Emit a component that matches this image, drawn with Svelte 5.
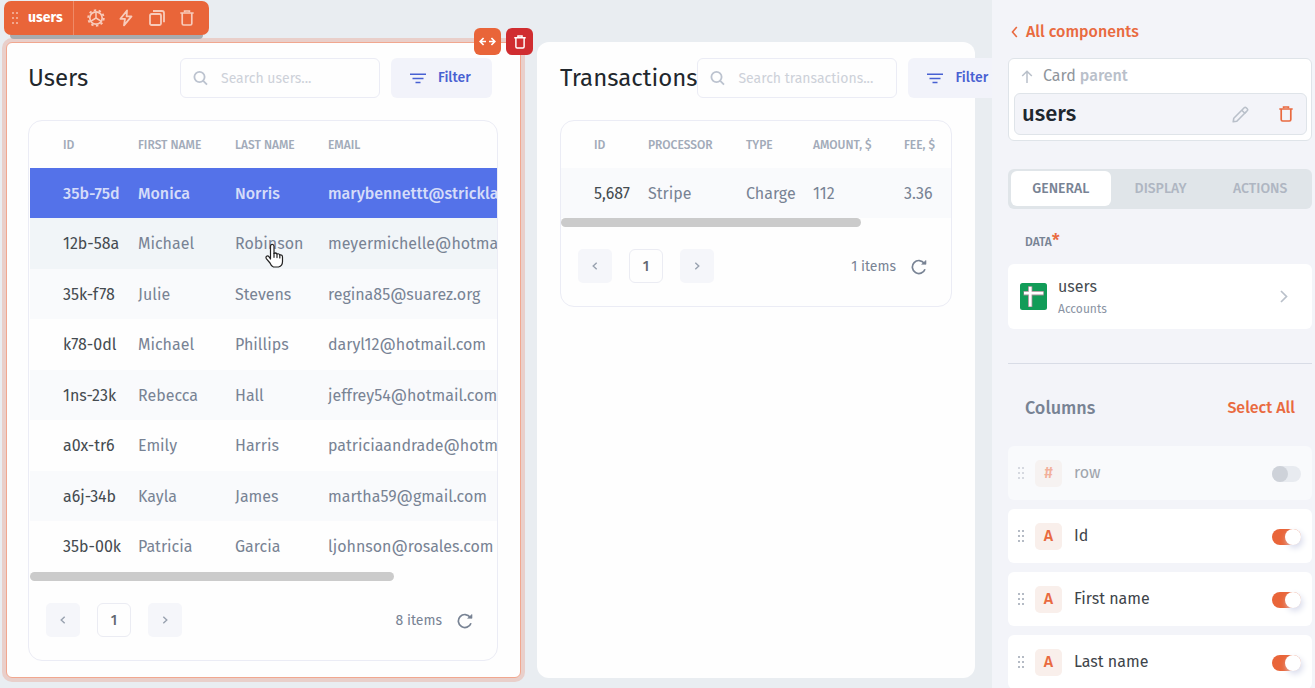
<script>
  const userColumns = ['ID', 'First name', 'Last name', 'Email'];
  const users = [
    ['35b-75d', 'Monica', 'Norris', 'marybennettt@strickland.com'],
    ['12b-58a', 'Michael', 'Robinson', 'meyermichelle@hotmail.com'],
    ['35k-f78', 'Julie', 'Stevens', 'regina85@suarez.org'],
    ['k78-0dl', 'Michael', 'Phillips', 'daryl12@hotmail.com'],
    ['1ns-23k', 'Rebecca', 'Hall', 'jeffrey54@hotmail.com'],
    ['a0x-tr6', 'Emily', 'Harris', 'patriciaandrade@hotmail.com'],
    ['a6j-34b', 'Kayla', 'James', 'martha59@gmail.com'],
    ['35b-00k', 'Patricia', 'Garcia', 'ljohnson@rosales.com']
  ];
  const transactionColumns = ['ID', 'Processor', 'Type', 'Amount, $', 'Fee, $'];
  const transactions = [['5,687', 'Stripe', 'Charge', '112', '3.36']];
  const tabs = ['General', 'Display', 'Actions'];

  let activeTab = $state('General');
  let fields = $state([
    { name: 'row', type: '#', on: false },
    { name: 'Id', type: 'A', on: true },
    { name: 'First name', type: 'A', on: true },
    { name: 'Last name', type: 'A', on: true }
  ]);
</script>

{#snippet trash(w)}
  <svg width={w} height={w + 2} viewBox="0 0 14 16" fill="none" stroke="currentColor" stroke-width="1.7">
    <path d="M0.3 3h13.4M2.2 3v10.6q0 1.4 1.4 1.4h6.8q1.4 0 1.4-1.4V3" />
    <path d="M4.6 2.3V1h4.8v1.3" />
  </svg>
{/snippet}

{#snippet grip()}
  <svg class="grip" width="8" height="14" viewBox="0 0 8 14" fill="currentColor">
    <path d="M0 1h2v2H0zM4 1h2v2H4zM0 6h2v2H0zM4 6h2v2H4zM0 11h2v2H0zM4 11h2v2H4z" />
  </svg>
{/snippet}

{#snippet header(title, placeholder)}
  <header class="card-head">
    <h2>{title}</h2>
    <label class="search">
      <svg width="15" height="15" viewBox="0 0 15 15" fill="none" stroke="currentColor" stroke-width="1.8">
        <circle cx="6.5" cy="6" r="5.1" /><path d="M10 9.6l4 4" />
      </svg>
      <input type="text" {placeholder} aria-label={placeholder} />
    </label>
    <button class="filter">
      <svg width="16" height="11" viewBox="0 0 16 11" stroke="currentColor" stroke-width="1.5">
        <path d="M0 1.2h16M2.5 5.4h11M5.5 9.6h5" />
      </svg>
      Filter
    </button>
  </header>
{/snippet}

{#snippet pager(count)}
  <div class="pager">
    <button class="step" aria-label="Previous page">
      <svg width="6" height="8" viewBox="0 0 6 8" fill="none" stroke="currentColor" stroke-width="1.4"><path d="M4.7 0.7L1.2 4l3.5 3.3" /></svg>
    </button>
    <button class="step current">1</button>
    <button class="step" aria-label="Next page">
      <svg width="6" height="8" viewBox="0 0 6 8" fill="none" stroke="currentColor" stroke-width="1.4"><path d="M1.3 0.7L4.8 4 1.3 7.3" /></svg>
    </button>
    <span class="count">{count} items</span>
    <button class="refresh" aria-label="Refresh">
      <svg width="16" height="16" viewBox="0 0 16 16" fill="none" stroke="currentColor" stroke-width="1.7">
        <path d="M14 10.2A6.5 6.5 0 1 1 13.2 4.3" /><path d="M15 1.4V5.3H10.6z" fill="currentColor" stroke-width="0.6" />
      </svg>
    </button>
  </div>
{/snippet}

{#snippet grid(columns, rows)}
  <div class="clip">
    <table>
      <colgroup>{#each columns as _}<col />{/each}</colgroup>
      <thead>
        <tr>{#each columns as c}<th>{c}</th>{/each}</tr>
      </thead>
      <tbody>
        {#each rows as row}
          <tr>{#each row as cell}<td>{cell}</td>{/each}</tr>
        {/each}
      </tbody>
    </table>
    <div class="thumb"></div>
  </div>
{/snippet}

<div class="app">
  <main class="canvas">
    <section class="card selected">
      <div class="toolbar">
        <span class="tag">{@render grip()}<b>users</b></span>
        <button aria-label="Settings">
          <svg width="18" height="18" viewBox="0 0 18 18" fill="none" stroke="currentColor">
            <circle cx="9" cy="9" r="6.2" stroke-width="1.7" />
            <circle cx="9" cy="9" r="7.8" stroke-width="1.8" stroke-dasharray="2.45 2.45" />
            <path d="M9 3v6M9 9l5 3.2M9 9l-5 3.2" stroke-width="1.5" />
          </svg>
        </button>
        <button aria-label="Triggers">
          <svg width="14" height="18" viewBox="0 0 14 18" fill="none" stroke="currentColor" stroke-width="1.8" stroke-linejoin="round">
            <path d="M8 1.5L1.4 9.8H6L5 16.3 12.5 7.4H7.6z" />
          </svg>
        </button>
        <button aria-label="Duplicate">
          <svg width="16" height="16" viewBox="0 0 16 16" fill="none" stroke="currentColor" stroke-width="1.8">
            <rect x="1" y="4" width="11" height="11" rx="1.5" /><path d="M4 1h9q2 0 2 2v9.3" />
          </svg>
        </button>
        <button aria-label="Delete users">{@render trash(14)}</button>
      </div>
      <div class="handles">
        <button aria-label="Resize">
          <svg width="17" height="9" viewBox="0 0 17 9" fill="none" stroke="currentColor" stroke-width="1.7">
            <path d="M4.6 1L1.2 4.5 4.6 8M1.2 4.5h5.8M12.4 1l3.4 3.5L12.4 8M15.8 4.5H10" />
          </svg>
        </button>
        <button class="danger" aria-label="Remove component">{@render trash(12)}</button>
      </div>
      {@render header('Users', 'Search users...')}
      <div class="panel users">
        {@render grid(userColumns, users)}
        {@render pager(8)}
      </div>
      <svg class="cursor" width="19" height="27" viewBox="0 0 19 27" fill="#fff" stroke="#222" stroke-width="1.2" stroke-linejoin="round" stroke-linecap="round">
        <path d="M5.5 16V3.3Q5.5 1.3 7.2 1.3T9 3.3v7.2q1.8-1.2 3 .5 2-.8 2.8.9 2.7-.5 2.7 2v4.5q0 4.5-4 5.6H8.4Q6.2 23.2 5 20L1.5 15.8Q.4 14.2 1.6 13.3t2.5.6z" />
        <path d="M9 10.3v4M12 11v3.6M14.8 12v3" fill="none" />
      </svg>
    </section>

    <section class="card">
      {@render header('Transactions', 'Search transactions...')}
      <div class="panel transactions">
        {@render grid(transactionColumns, transactions)}
        {@render pager(1)}
      </div>
    </section>
  </main>

  <aside>
    <a class="back" href="#components">
      <svg width="7" height="12" viewBox="0 0 7 12" fill="none" stroke="currentColor" stroke-width="1.6"><path d="M5.8 1L1.5 6l4.3 5" /></svg>
      All components
    </a>

    <div class="identity">
      <div class="parent">
        <svg width="12" height="13" viewBox="0 0 12 13" fill="none" stroke="currentColor" stroke-width="1.5"><path d="M6 13V1.5M1.2 6L6 1.2 10.8 6" /></svg>
        <span><em>Card</em> parent</span>
      </div>
      <div class="name">
        <h1>users</h1>
        <button class="edit" aria-label="Rename">
          <svg width="17" height="17" viewBox="0 0 17 17" fill="none" stroke="currentColor" stroke-width="1.6" stroke-linejoin="round">
            <path d="M1.2 15.8l.6-3.6L12.2 1.8q1-1 2 0l1 1q1 1 0 2L4.8 15.2z" /><path d="M9.8 4.2l3 3M12.8 7.2L14 6" />
          </svg>
        </button>
        <button class="drop" aria-label="Delete component">{@render trash(14)}</button>
      </div>
    </div>

    <div class="tabs" role="tablist">
      {#each tabs as tab}
        <button role="tab" aria-selected={activeTab === tab} class:active={activeTab === tab} onclick={() => (activeTab = tab)}>{tab}</button>
      {/each}
    </div>

    <h3 class="label">Data<span>*</span></h3>
    <button class="source">
      <svg width="27" height="27" viewBox="0 0 27 27">
        <rect width="27" height="27" rx="2.5" fill="#119c58" />
        <path d="M3.5 10.2h20.3M10.2 3.2v20.8" stroke="#a08b91" stroke-width="4.4" />
        <path d="M4 10.2h19.3M10.2 3.7v19.8" stroke="#fff" stroke-width="2.8" />
      </svg>
      <span class="source-text"><span>users</span><small>Accounts</small></span>
      <svg class="go" width="8" height="13" viewBox="0 0 8 13" fill="none" stroke="currentColor" stroke-width="1.7"><path d="M1 1l5.5 5.5L1 12" /></svg>
    </button>

    <hr />

    <div class="columns-head">
      <h3>Columns</h3>
      <button>Select All</button>
    </div>
    <div class="fields">
      {#each fields as field}
        <label class="field" class:off={!field.on}>
          {@render grip()}
          <span class="type">{field.type}</span>
          <span class="field-name">{field.name}</span>
          <input type="checkbox" bind:checked={field.on} />
        </label>
      {/each}
    </div>
  </aside>
</div>

<style>
  :global(body) { background: #e9edf1; }
  .app, .app * { box-sizing: border-box; }
  .app {
    display: flex;
    height: 100vh;
    min-height: 400px;
    overflow: hidden;
    font-family: "Fira Sans", Roboto, "Noto Sans", sans-serif;
    font-size: 16px;
    line-height: 20px;
    color: #788394;
  }
  svg { display: block; flex: none; }
  h1, h2, h3 { margin: 0; font-weight: 400; }
  button {
    display: flex;
    align-items: center;
    justify-content: center;
    flex: none;
    padding: 0;
    border: 0;
    background: none;
    color: inherit;
    font: inherit;
    cursor: pointer;
  }

  .canvas {
    flex: 1;
    min-width: 0;
    display: grid;
    grid-template-columns: 515fr 438fr;
    gap: 16px;
    padding: 42px 17px 10px 6px;
    background: #e9edf1;
    overflow: hidden;
  }
  .card {
    position: relative;
    min-width: 0;
    padding: 16px 23px;
    border-radius: 12px;
    background: #fefefe;
  }
  .selected {
    padding: 15px 22px 15px 21px;
    border: 1px solid #f1a78f;
    border-radius: 6px;
    box-shadow: 0 0 0 4px #e9cfca;
  }
  .selected .card-head { padding-right: 6px; }
  .card-head { display: flex; align-items: center; }
  h2 { flex: none; margin-right: auto; font-size: 24px; line-height: 40px; color: #22272c; }
  .search {
    display: flex;
    align-items: center;
    gap: 13px;
    flex: none;
    width: 200px;
    height: 40px;
    padding: 0 12px;
    border: 1px solid #ebecf5;
    border-radius: 6px;
    color: #bcc3cf;
  }
  .search input {
    min-width: 0;
    width: 100%;
    padding: 1px 0 0;
    border: 0;
    outline: 0;
    background: none;
    font: inherit;
    font-size: 14px;
    color: #444;
  }
  .search input::placeholder { color: #cdd1d9; opacity: 1; }
  .filter {
    justify-content: flex-start;
    gap: 12px;
    width: 101px;
    height: 40px;
    margin-left: 11px;
    padding-left: 19px;
    border-radius: 6px;
    background: #f2f3fa;
    color: #4861d2;
    font-size: 14px;
    font-weight: 500;
  }

  .panel { margin-top: 22px; border: 1px solid #ebecf5; border-radius: 14px; }
  .users { padding-left: 1px; }
  .clip { overflow: hidden; }
  table { table-layout: fixed; border-collapse: collapse; width: 600px; }
  .users col:nth-child(1) { width: 108px; }
  .users col:nth-child(2) { width: 97px; }
  .users col:nth-child(3) { width: 93px; }
  .transactions col:nth-child(1) { width: 87px; }
  .transactions col:nth-child(2) { width: 98px; }
  .transactions col:nth-child(3) { width: 67px; }
  .transactions col:nth-child(4) { width: 91px; }
  th, td { padding: 0; text-align: left; white-space: nowrap; }
  th:first-child, td:first-child { padding-left: 33px; }
  th { height: 47px; font-size: 12px; font-weight: 500; text-transform: uppercase; color: #a2abb9; }
  td { height: 50px; padding-top: 2px; }
  tr:nth-child(even) td { height: 51px; padding-top: 1px; }
  td:first-child { color: #454b50; }
  tbody tr:nth-child(odd) { background: #f9fafc; }
  .users tbody tr:nth-child(1) { background: #5472e9; }
  .users tbody tr:nth-child(1) td { color: #d5dcf9; font-weight: 500; }
  .users tbody tr:nth-child(2) { background: #f1f5f8; }
  .thumb { width: 78%; height: 9px; border-radius: 5px; background: #cbcbcb; }
  .transactions .thumb { width: 77%; }

  .pager { display: flex; align-items: center; padding: 22px 24px 23px 17px; }
  .users .pager { padding-left: 16px; }
  .step { width: 34px; height: 34px; margin-right: 17px; border-radius: 5px; background: #f5f6fa; color: #98a1af; }
  .current { border: 1px solid #ebecf3; border-radius: 6px; background: #fefefe; color: #616870; font-size: 14px; font-weight: 500; }
  .current, .count, .refresh { padding-top: 2px; }
  .count { margin-left: auto; font-size: 14px; }
  .refresh { margin-left: 15px; }

  .toolbar {
    position: absolute;
    top: -42px;
    left: -3px;
    display: flex;
    align-items: center;
    width: 205px;
    height: 34px;
    padding-right: 7px;
    border-radius: 7px;
    background: #e96539;
    color: #f8cbbb;
  }
  .toolbar::after {
    content: "";
    position: absolute;
    left: 6px;
    right: 6px;
    top: 34px;
    height: 4px;
    border-radius: 0 0 6px 6px;
    background: #a9abae;
  }
  .toolbar button { flex: 1; }
  .tag { display: flex; align-items: center; gap: 8px; width: 70px; height: 34px; padding-left: 8px; margin-right: 7px; border-right: 1px solid #ef8a67; color: #f2a78e; }
  .tag b { font-size: 14px; font-weight: 700; color: #fff; }
  .handles { position: absolute; top: -15px; right: -13px; display: flex; gap: 5px; }
  .handles button { width: 27px; height: 27px; border-radius: 6px; background: #e96539; color: #fff; }
  .handles .danger { background: #d02d30; }
  .cursor { position: absolute; left: 258px; top: 200px; }

  aside { position: relative; flex: none; width: 323px; padding: 22px 3px 0 16px; background: #f3f4f9; overflow: hidden; }
  .back { display: flex; align-items: center; gap: 8px; padding-left: 3px; color: #e96a40; font-weight: 500; text-decoration: none; }
  .identity { margin-top: 16px; padding: 5px 4px 5px 5px; border: 1px solid #dfe4e9; border-radius: 6px; background: #fff; }
  .parent { display: flex; align-items: center; gap: 10px; height: 29px; padding: 0 7px 5px; color: #b9c0ca; font-weight: 500; }
  .parent em { font-style: normal; color: #8f959c; font-weight: 400; }
  .name { display: flex; align-items: center; height: 42px; padding: 0 13px 0 7px; border: 1px solid #dfe4e9; border-radius: 6px; background: #f3f4f9; }
  h1 { font-size: 22px; line-height: 28px; font-weight: 500; color: #20262e; }
  .edit { margin-left: auto; color: #b9c0ca; }
  .drop { margin-left: 30px; color: #e96a40; }
  .tabs { display: flex; margin-top: 28px; padding: 2px 2px 3px 3px; height: 40px; border-radius: 6px; background: #e0e5e9; }
  .tabs button { flex: 1; border-radius: 6px; color: #afb6c2; font-size: 14px; font-weight: 500; text-transform: uppercase; }
  .tabs .active { background: #fff; color: #788394; }
  .label { display: flex; margin-top: 23px; padding-left: 17px; font-size: 12px; font-weight: 500; text-transform: uppercase; }
  .label span { font-size: 18px; line-height: 18px; color: #e96a40; }
  .source { width: 100%; height: 65px; margin-top: 12px; padding: 0 24px 0 12px; border-radius: 6px; background: #fff; }
  .source-text { display: flex; flex-direction: column; margin: 0 auto 0 11px; padding-top: 2px; text-align: left; color: #454b50; }
  small { margin-top: 2px; font-size: 12px; color: #8a93a3; }
  .go { color: #b9c0ca; }
  hr { height: 1px; margin: 34px 0 0; border: 0; background: #d8dce6; }
  .columns-head { display: flex; justify-content: space-between; align-items: center; margin-top: 34px; padding: 0 17px; }
  .columns-head h3 { font-size: 18px; font-weight: 500; }
  .columns-head button { color: #e96a40; font-weight: 500; }
  .fields { display: grid; gap: 9px; margin-top: 28px; }
  .field { display: flex; align-items: center; height: 54px; padding: 0 11px 0 10px; border-radius: 6px; background: #fff; color: #3e444a; }
  .field .grip { color: #b5bbc5; }
  .type { display: grid; place-items: center; width: 27px; height: 27px; margin: 0 12px 0 9px; border-radius: 5px; background: #f9efeb; color: #e96a40; font-weight: 500; }
  .field input {
    appearance: none;
    display: flex;
    width: 29px;
    height: 16px;
    margin: 2px 0 0 auto;
    border-radius: 8px;
    background: #e96539;
  }
  .field input::before { content: ""; width: 16px; height: 16px; margin-left: auto; border-radius: 50%; background: #fff; box-shadow: 2px 3px 6px #d9dcec; }
  .off { background: #f9fafc; color: #a0a5ac; }
  .off .grip { color: #d6d9e0; }
  .off .type { background: #f6f2f1; color: #f2b09b; }
  .field.off input { background: #e8ebf0; }
  .field.off input::before { margin-left: 0; background: #ced2d9; box-shadow: none; }
</style>
